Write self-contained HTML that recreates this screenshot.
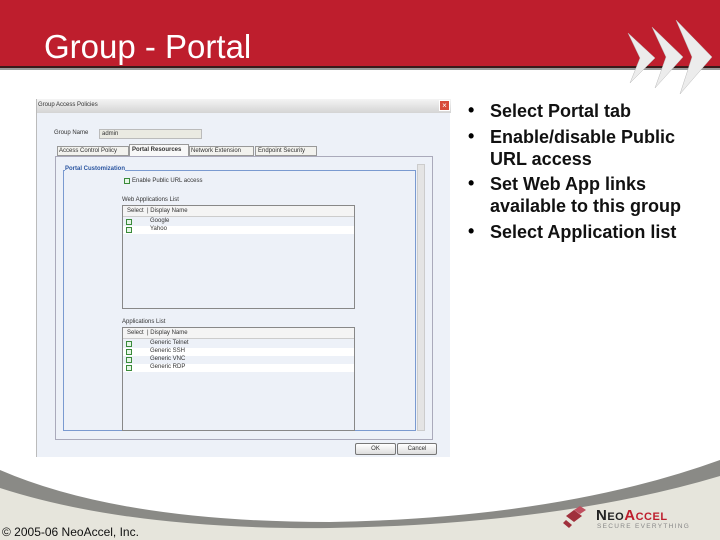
<!DOCTYPE html>
<html><head><meta charset="utf-8"><style>
*{margin:0;padding:0;box-sizing:border-box}
body{width:720px;height:540px;position:relative;overflow:hidden;background:#fff;font-family:"Liberation Sans",sans-serif}
.a{position:absolute}
.s{font-size:6px;color:#333;white-space:nowrap}
.cb{position:absolute;width:6px;height:6px;border:1px solid #3a8a3a;background:#e6f5e6}
.bl{position:absolute;left:468px;font-size:18px;font-weight:bold}
.tx{position:absolute;left:490px;font-size:18px;font-weight:bold;line-height:22px;color:#111}
</style></head><body>
<svg class="a" style="left:0;top:0" width="720" height="540">
<rect x="0" y="0" width="720" height="66" fill="#be1e2d"/>
<rect x="0" y="66" width="720" height="2" fill="#3a1a1a"/>
<rect x="0" y="68" width="720" height="2" fill="#999"/>
<g fill="#ececec" stroke="#bbb" stroke-width="0.5">
<path d="M628 33 L655 58 L630 83 L640 58 Z"/>
<path d="M652 27 L683 57 L655 88 L666 57 Z"/>
<path d="M676 20 L712 57 L680 94 L692 57 Z"/>
</g>
<path d="M0 470 Q120 522 330 522 Q560 518 720 460 L720 540 L0 540 Z" fill="#8a8a86"/>
<path d="M0 488 Q130 530 330 528 Q560 524 720 476 L720 540 L0 540 Z" fill="#e6e5dc"/>
<g fill="#a0303c"><path d="M566 516 l8 -6 l8 6 l-8 6 z"/><path d="M574 510 l6 -4 l6 4 l-6 4 z" fill="#c05060"/><path d="M566 520 l6 5 l-3 3 l-6 -5z"/></g>
</svg>
<div class="a" style="left:44px;top:28px;font-size:33px;color:#fff">Group - Portal</div>
<div class="a" style="left:596px;top:507px;font-size:15px;font-weight:bold;color:#222;letter-spacing:0.5px">N<span style="font-size:11px">EO</span><span style="color:#be1e2d">A<span style="font-size:11px">CCEL</span></span></div>
<div class="a" style="left:597px;top:523px;font-size:6.5px;color:#888;letter-spacing:1.3px">SECURE EVERYTHING</div>
<div class="a" style="left:2px;top:525px;font-size:12px;color:#111">© 2005-06 NeoAccel, Inc.</div>

<div class="a" style="left:36px;top:99px;width:414px;height:358px;background:#edf1f8;border-left:1px solid #bbb">
 <div class="a" style="left:0;top:0;width:414px;height:14px;background:linear-gradient(#f4f4f4,#d4d4d4)"></div>
 <div class="a s" style="left:1px;top:3px">Group Access Policies</div>
 <div class="a" style="left:402px;top:1px;width:11px;height:11px;background:#d84a3a;border:1px solid #fff;color:#fff;font-size:8px;line-height:9px;text-align:center">×</div>
 <div class="a s" style="left:17px;top:31px">Group Name</div>
 <div class="a" style="left:62px;top:30px;width:103px;height:10px;background:#eaeae2;border:1px solid #bbb"></div>
 <div class="a s" style="left:65px;top:32px">admin</div>
 <div class="a" style="left:18px;top:57px;width:378px;height:284px;border:1px solid #aab;background:#edf1f8"></div>
 <div class="a s" style="left:20px;top:47px;width:72px;height:10px;border:1px solid #999;background:#f2f2ee;padding:1px 1px">Access Control Policy</div>
 <div class="a s" style="left:92px;top:45px;width:60px;height:12px;border:1px solid #999;border-bottom:none;background:#f8f8f8;padding:2px 2px;font-weight:bold">Portal Resources</div>
 <div class="a s" style="left:152px;top:47px;width:65px;height:10px;border:1px solid #999;background:#f2f2ee;padding:1px 1px">Network Extension</div>
 <div class="a s" style="left:218px;top:47px;width:62px;height:10px;border:1px solid #999;background:#f2f2ee;padding:1px 2px">Endpoint Security</div>
 <div class="a" style="left:26px;top:71px;width:353px;height:261px;border:1px solid #7a9ad0"></div>
 <div class="a s" style="left:28px;top:67px;background:#edf1f8;color:#2a55a0;font-weight:bold">Portal Customization</div>
 <div class="a" style="left:380px;top:65px;width:8px;height:267px;background:#e4e4e4;border:1px solid #ccc"></div>
 <div class="cb" style="left:87px;top:79px"></div>
 <div class="a s" style="left:95px;top:79px">Enable Public URL access</div>
 <div class="a s" style="left:85px;top:98px">Web Applications List</div>
 <div class="a" style="left:85px;top:106px;width:233px;height:104px;border:1px solid #888;background:#edf1f8"></div>
 <div class="a" style="left:86px;top:107px;width:231px;height:11px;background:#f4f4f4;border-bottom:1px solid #ccc"></div>
 <div class="a s" style="left:90px;top:109px">Select &nbsp;| Display Name</div>
 <div class="a" style="left:86px;top:127px;width:231px;height:8px;background:#fff"></div>
 <div class="cb" style="left:89px;top:120px"></div><div class="a s" style="left:113px;top:119px">Google</div>
 <div class="cb" style="left:89px;top:128px"></div><div class="a s" style="left:113px;top:127px">Yahoo</div>
 <div class="a s" style="left:85px;top:220px">Applications List</div>
 <div class="a" style="left:85px;top:228px;width:233px;height:104px;border:1px solid #888;background:#edf1f8"></div>
 <div class="a" style="left:86px;top:229px;width:231px;height:11px;background:#f4f4f4;border-bottom:1px solid #ccc"></div>
 <div class="a s" style="left:90px;top:231px">Select &nbsp;| Display Name</div>
 <div class="a" style="left:86px;top:249px;width:231px;height:8px;background:#fff"></div>
 <div class="a" style="left:86px;top:265px;width:231px;height:8px;background:#fff"></div>
 <div class="cb" style="left:89px;top:242px"></div><div class="a s" style="left:113px;top:241px">Generic Telnet</div>
 <div class="cb" style="left:89px;top:250px"></div><div class="a s" style="left:113px;top:249px">Generic SSH</div>
 <div class="cb" style="left:89px;top:258px"></div><div class="a s" style="left:113px;top:257px">Generic VNC</div>
 <div class="cb" style="left:89px;top:266px"></div><div class="a s" style="left:113px;top:265px">Generic RDP</div>
 <div class="a s" style="left:318px;top:344px;width:41px;height:12px;border:1px solid #777;border-radius:2px;background:linear-gradient(#fff,#ddd);text-align:center;line-height:10px">OK</div>
 <div class="a s" style="left:360px;top:344px;width:40px;height:12px;border:1px solid #777;border-radius:2px;background:linear-gradient(#fff,#ddd);text-align:center;line-height:10px">Cancel</div>
</div>

<div class="bl" style="top:100px">•</div><div class="tx" style="top:100px">Select Portal tab</div>
<div class="bl" style="top:126px">•</div><div class="tx" style="top:126px">Enable/disable Public<br>URL access</div>
<div class="bl" style="top:173px">•</div><div class="tx" style="top:173px">Set Web App links<br>available to this group</div>
<div class="bl" style="top:221px">•</div><div class="tx" style="top:221px">Select Application list</div>
</body></html>
